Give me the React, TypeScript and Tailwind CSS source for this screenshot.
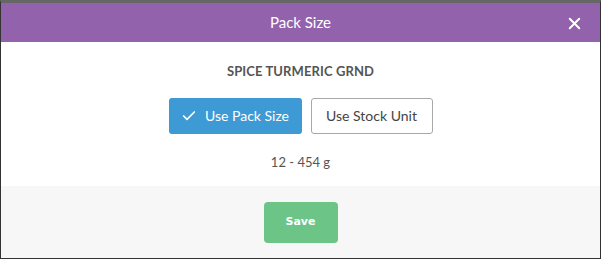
import { X, Check } from "lucide-react";

export default function App() {
  return (
    <div
      className="w-[601px] h-[259px] flex flex-col border-l border-r border-b border-[#333] border-t-[3px] border-t-[#666] bg-white"
      style={{ fontFamily: "Lato, 'Noto Sans', sans-serif" }}
    >
      {/* Header */}
      <div className="relative h-[39px] bg-[#9263ac] flex items-center justify-center shrink-0">
        <span className="text-white text-[15px]">Pack Size</span>
        <button className="absolute right-[16px] top-[11px] text-white">
          <X size={19} strokeWidth={2.5} />
        </button>
      </div>

      {/* Body */}
      <div className="h-[144px] flex flex-col items-center pt-[20px] shrink-0">
        <div className="text-[13px] font-bold text-[#555] tracking-[0.1px]">SPICE TURMERIC GRND</div>
        <div className="flex gap-[9px] mt-[16px]">
          <button className="w-[133px] h-[36px] rounded-[3px] bg-[#3d9ad5] text-white text-[14px] flex items-center justify-center gap-[8px]">
            <Check size={16} strokeWidth={2.5} />
            <span>Use Pack Size</span>
          </button>
          <button className="w-[122px] h-[36px] rounded-[3px] border border-[#a9a9a9] bg-white text-[#444] text-[14px] flex items-center justify-center">
            Use Stock Unit
          </button>
        </div>
        <div className="mt-[19px] text-[13px] text-[#555]">12 - 454 g</div>
      </div>

      {/* Footer */}
      <div className="flex-1 bg-[#f7f7f7] flex justify-center pt-[16px]">
        <button
          className="w-[74px] h-[41px] rounded-[4px] bg-[#6cc487] text-white text-[11px] font-bold"
          style={{ fontFamily: "'DejaVu Sans', Verdana, sans-serif" }}
        >
          Save
        </button>
      </div>
    </div>
  );
}
